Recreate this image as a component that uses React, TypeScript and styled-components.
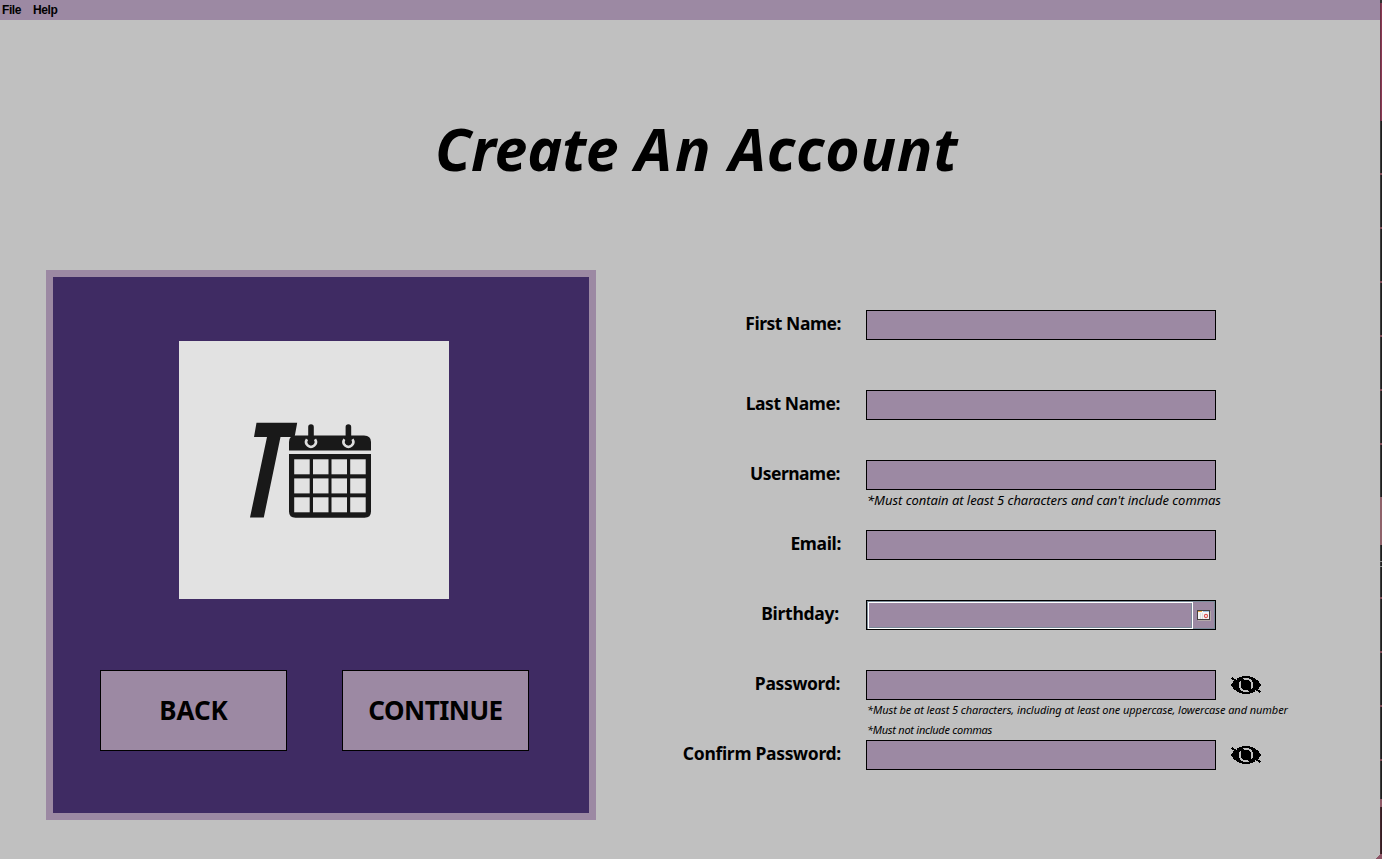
import React from 'react';
import styled, { createGlobalStyle } from 'styled-components';

const GlobalStyle = createGlobalStyle`
  * { box-sizing: border-box; }
  body { margin: 0; background: #c0c0c0; color: #000; overflow: hidden; }
`;

const Screen = styled.div`
  display: grid;
  grid-template-columns: 1380px 2px;
  width: 1382px;
  height: 859px;
`;

const Window = styled.div`
  display: flex;
  flex-direction: column;
  background: linear-gradient(135deg, #c0c0c0 50%, #8d5566 50%) right bottom / 4px 4px no-repeat, #c0c0c0;
`;

const edgeTicks = [173, 227, 281, 335, 389, 443, 597, 651, 705, 759]
  .map((y) => `linear-gradient(#84505a, #84505a) 0 ${y}px / 2px 2px no-repeat`)
  .join(', ');

const DesktopEdge = styled.div`
  background:
    linear-gradient(#333, #333) 0 0 / 2px 3px no-repeat,
    linear-gradient(90deg, #6d3247 50%, #8a3a55 50%) 0 3px / 2px 118px no-repeat,
    linear-gradient(#8f626a, #8f626a) 0 497px / 2px 48px no-repeat,
    linear-gradient(#8d8d8d, #8d8d8d) 0 561px / 2px 1px no-repeat,
    linear-gradient(#8d8d8d, #8d8d8d) 0 566px / 2px 1px no-repeat,
    linear-gradient(#8f5a68, #8f5a68) 0 799px / 2px 8px no-repeat,
    linear-gradient(90deg, #44272d 50%, #351c22 50%) 0 807px / 2px 47px no-repeat,
    linear-gradient(#8d5566, #8d5566) 0 854px / 2px 5px no-repeat,
    ${edgeTicks},
    linear-gradient(90deg, #3a3a3a 50%, #1e1e1e 50%);
`;

const MenuBar = styled.nav`
  display: flex;
  gap: 12px;
  height: 20px;
  padding-left: 2px;
  background: #9c89a3;
`;

const MenuItem = styled.span`
  font: bold 12px/20px 'Liberation Sans', sans-serif;
  letter-spacing: -0.4px;
`;

const Title = styled.h1`
  display: flex;
  margin: 87px 0 0 435px;
  height: 84px;
  white-space: nowrap;
  font: italic bold 59px/82px 'Noto Sans', sans-serif;
`;

const TitleWord = styled.span<{ $width?: number; $spacing: number }>`
  width: ${(p) => (p.$width ? `${p.$width}px` : 'auto')};
  letter-spacing: ${(p) => p.$spacing}px;
`;

const Content = styled.main`
  display: flex;
  align-items: flex-start;
  padding: 79px 0 0 46px;
`;

const Card = styled.section`
  display: flex;
  flex-direction: column;
  width: 550px;
  height: 550px;
  border: 7px solid #9c89a3;
  background: #3f2b63;
`;

const LogoTile = styled.div`
  width: 270px;
  height: 258px;
  margin: 64px 0 0 126px;
  background: #e2e2e2;
`;

const Actions = styled.div`
  display: flex;
  gap: 55px;
  margin: 71px 0 0 47px;
`;

const ActionButton = styled.button<{ $spacing?: number }>`
  width: 187px;
  height: 81px;
  padding: 0;
  border: 1px solid #000;
  border-radius: 0;
  background: #9c89a3;
  color: #000;
  font: bold 26px/79px 'Noto Sans', sans-serif;
  letter-spacing: ${(p) => p.$spacing ?? 0}px;
`;

const Form = styled.form`
  width: 784px;
  padding-top: 40px;
`;

const FieldRow = styled.div<{ $height: number }>`
  display: grid;
  grid-template-columns: 245px 350px 46px;
  grid-template-rows: 30px;
  column-gap: 25px;
  align-content: start;
  height: ${(p) => p.$height}px;
`;

const Label = styled.label<{ $spacing: number; $inset?: number }>`
  padding-right: ${(p) => p.$inset ?? 0}px;
  text-align: right;
  white-space: nowrap;
  font: bold 17.5px/26px 'Noto Sans', sans-serif;
  letter-spacing: ${(p) => p.$spacing}px;
`;

const Input = styled.input`
  width: 350px;
  height: 30px;
  padding: 0 6px;
  border: 1px solid #000;
  border-radius: 0;
  outline: 0;
  background: #9c89a3;
  font: 16px 'Noto Sans', sans-serif;
`;

const DateField = styled.div`
  display: flex;
  width: 350px;
  height: 30px;
  border: 1px solid #000;
  background: #9c89a3;
  box-shadow: inset 0 0 0 1px #7a8a99;
`;

const DateInput = styled.input`
  width: 325px;
  height: 27px;
  margin: 1px 0 0 1px;
  padding: 0 6px;
  border: 1px solid #fff;
  border-radius: 0;
  outline: 0;
  background: #9c89a3;
  box-shadow: inset 0 -1px #7a8a99, inset -1px 0 #7a8a99;
`;

const DateButton = styled.span`
  display: flex;
  padding: 9px 0 0 4px;
`;

const EyeToggle = styled.span`
  display: block;
  height: 30px;
  margin-left: -11px;
  padding-top: 4px;
`;

const Note = styled.p<{ $size: number; $spacing: number }>`
  grid-column: 2 / 4;
  margin: 0 0 0 1px;
  white-space: nowrap;
  font: italic ${(p) => p.$size}px/20px 'Noto Sans', sans-serif;
  letter-spacing: ${(p) => p.$spacing}px;
`;

const Logo = () => (
  <svg width="270" height="258" viewBox="179 341 270 258">
    <path d="M256.5 422.7H297.2L294.6 437H280.5L263.8 517.5H250L267 437H254Z" fill="#191919" />
    <path d="M289 450.5V442Q289 435.5 295.5 435.5H364Q371 435.5 371 442V450.5Z" fill="#191919" />
    <g fill="none" stroke="#dedede" strokeWidth="2.6">
      <path d="M307 439.2A4.8 4.8 0 1 0 315 439.2" />
      <path d="M344.4 439.2A4.8 4.8 0 1 0 352.4 439.2" />
    </g>
    <path d="M311 427V442.5M348.4 427V442.5" stroke="#191919" strokeWidth="5.6" strokeLinecap="round" />
    <path d="M289 454H371V511.5Q371 517.7 364.5 517.7H295.5Q289 517.7 289 511.5Z" fill="#191919" />
    <g fill="#e2e2e2">
      {[459.3, 478.4, 497.3].map((y) =>
        [294.2, 313, 331.5, 350.2].map((x) => <rect key={`${x}-${y}`} x={x} y={y} width="15.5" height="15" />),
      )}
    </g>
  </svg>
);

const CalendarIcon = () => (
  <svg width="14" height="12" viewBox="0 0 14 12" shapeRendering="crispEdges">
    <path d="M1 10H13V1H14V11H1Z" fill="#b3a9a9" />
    <rect width="13" height="10" fill="#454040" />
    <rect x="1" y="1" width="11" height="8" fill="#f5f5f5" />
    <path d="M1 1.5H5" stroke="#f0ad4e" />
    <path d="M6 1.5H12" stroke="#9fc0e0" />
    <path d="M3.5 3V9M5.5 3V9" stroke="#dedede" />
    <circle cx="9" cy="6" r="1.6" fill="none" stroke="#df5555" strokeWidth="1.1" shapeRendering="auto" />
  </svg>
);

const EyeOffIcon = () => (
  <svg width="32" height="22" viewBox="0 0 32 22" shapeRendering="crispEdges">
    <path d="M1 11C3 6 9 2 16 2S29 6 31 11C29 16 23 20 16 20S3 16 1 11Z" fill="#000" />
    <circle cx="16" cy="11" r="6.3" fill="none" stroke="#c0c0c0" strokeWidth="2" />
    <path d="M10 6L13 4.5L22 16L19 18Z" fill="#000" />
    <path d="M3 3.8L7 5.8M25 16.8L28.5 18.6" stroke="#c0c0c0" strokeWidth="1" />
    <path d="M1.5 4L5.5 6.2M26 15.5L30.5 18" stroke="#000" strokeWidth="2" />
    <circle cx="16" cy="11" r="5" fill="#000" />
  </svg>
);

export default function App() {
  return (
    <>
      <GlobalStyle />
      <Screen>
        <Window>
          <MenuBar>
            <MenuItem>File</MenuItem>
            <MenuItem>Help</MenuItem>
          </MenuBar>
          <Title>
            <TitleWord $width={200} $spacing={-0.2}>Create </TitleWord>
            <TitleWord $width={94} $spacing={3}>An </TitleWord>
            <TitleWord $spacing={0.7}>Account</TitleWord>
          </Title>
          <Content>
            <Card>
              <LogoTile><Logo /></LogoTile>
              <Actions>
                <ActionButton>BACK</ActionButton>
                <ActionButton $spacing={-0.5}>CONTINUE</ActionButton>
              </Actions>
            </Card>
            <Form>
              <FieldRow $height={80}><Label $spacing={-0.45}>First Name:</Label><Input /></FieldRow>
              <FieldRow $height={70}><Label $spacing={-0.4} $inset={1}>Last Name:</Label><Input /></FieldRow>
              <FieldRow $height={70}>
                <Label $spacing={-0.5} $inset={1}>Username:</Label><Input />
                <Note $size={13} $spacing={-0.05}>*Must contain at least 5 characters and can't include commas</Note>
              </FieldRow>
              <FieldRow $height={70}><Label $spacing={-0.35}>Email:</Label><Input /></FieldRow>
              <FieldRow $height={70}>
                <Label $spacing={-0.25} $inset={2}>Birthday:</Label>
                <DateField><DateInput /><DateButton><CalendarIcon /></DateButton></DateField>
              </FieldRow>
              <FieldRow $height={70}>
                <Label $spacing={-0.35} $inset={1}>Password:</Label><Input type="password" />
                <EyeToggle><EyeOffIcon /></EyeToggle>
                <Note $size={11} $spacing={-0.07}>
                  *Must be at least 5 characters, including at least one uppercase, lowercase and number
                </Note>
                <Note $size={11} $spacing={-0.27}>*Must not include commas</Note>
              </FieldRow>
              <FieldRow $height={30}>
                <Label $spacing={-0.3}>Confirm Password:</Label><Input type="password" />
                <EyeToggle><EyeOffIcon /></EyeToggle>
              </FieldRow>
            </Form>
          </Content>
        </Window>
        <DesktopEdge />
      </Screen>
    </>
  );
}
